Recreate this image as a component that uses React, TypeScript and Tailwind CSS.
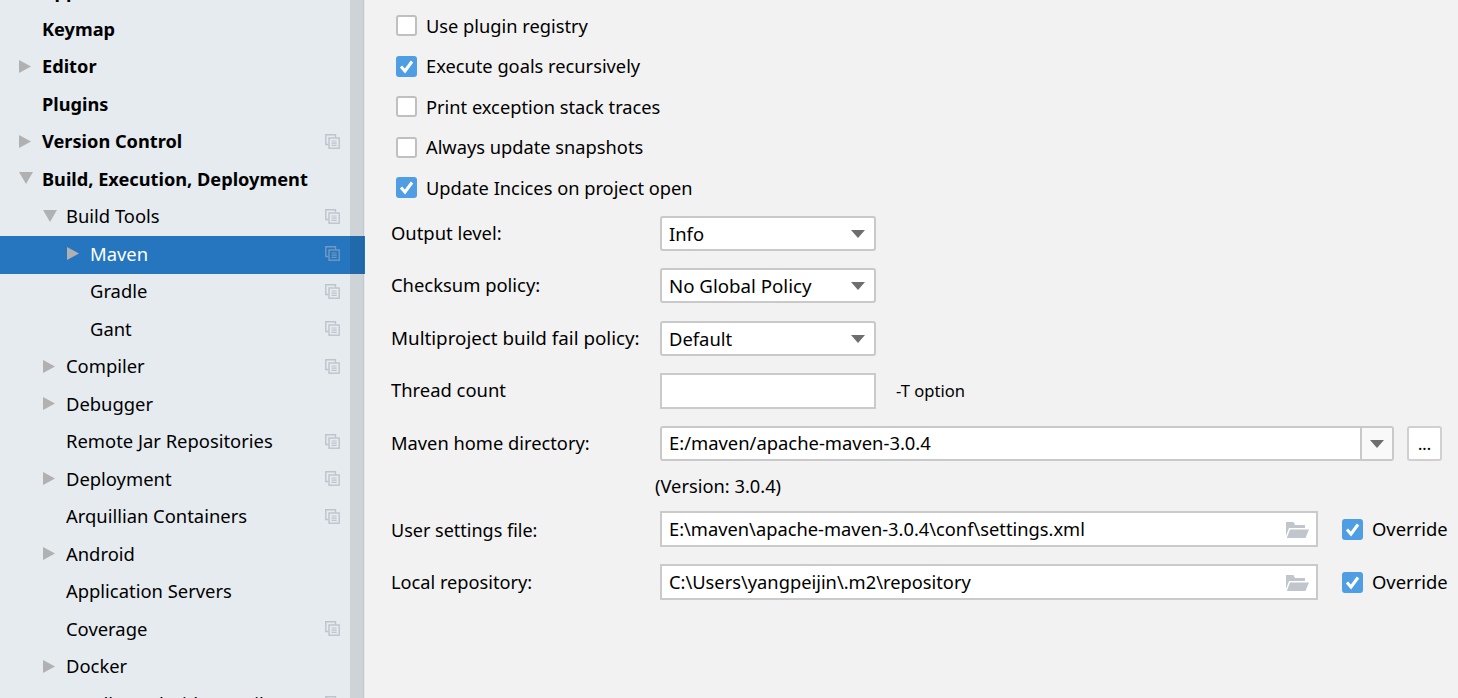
type TreeItem = {
  label: string;
  depth: number;
  arrow?: "right" | "down";
  bold?: boolean;
  copy?: boolean;
  selected?: boolean;
};

const TREE: TreeItem[] = [
  { label: "Appearance & Behavior", depth: 0, arrow: "right", bold: true },
  { label: "Keymap", depth: 0, bold: true },
  { label: "Editor", depth: 0, arrow: "right", bold: true },
  { label: "Plugins", depth: 0, bold: true },
  { label: "Version Control", depth: 0, arrow: "right", bold: true, copy: true },
  { label: "Build, Execution, Deployment", depth: 0, arrow: "down", bold: true },
  { label: "Build Tools", depth: 1, arrow: "down", copy: true },
  { label: "Maven", depth: 2, arrow: "right", copy: true, selected: true },
  { label: "Gradle", depth: 2, copy: true },
  { label: "Gant", depth: 2, copy: true },
  { label: "Compiler", depth: 1, arrow: "right", copy: true },
  { label: "Debugger", depth: 1, arrow: "right" },
  { label: "Remote Jar Repositories", depth: 1, copy: true },
  { label: "Deployment", depth: 1, arrow: "right", copy: true },
  { label: "Arquillian Containers", depth: 1, copy: true },
  { label: "Android", depth: 1, arrow: "right" },
  { label: "Application Servers", depth: 1 },
  { label: "Coverage", depth: 1, copy: true },
  { label: "Docker", depth: 1, arrow: "right" },
  { label: "Gradle-Android Compiler", depth: 1, copy: true },
];

const CHECKS = [
  { label: "Use plugin registry", checked: false },
  { label: "Execute goals recursively", checked: true },
  { label: "Print exception stack traces", checked: false },
  { label: "Always update snapshots", checked: false },
  { label: "Update Incices on project open", checked: true },
];

function CopyIcon({ dim }: { dim?: boolean }) {
  return (
    <svg
      width="15"
      height="15"
      viewBox="0 0 15 15"
      fill="none"
      stroke="#b9c0c7"
      strokeWidth="1.4"
      className={`shrink-0 ${dim ? "opacity-50" : "opacity-90"}`}
    >
      <path d="M3.5 10.5H.8V.8h9.7v2.7" />
      <rect x="4" y="4" width="10.2" height="10.2" />
      <path d="M6.5 7h5.2M6.5 9.2h5.2M6.5 11.4h5.2" strokeWidth="1.2" />
    </svg>
  );
}

function Arrow({ dir }: { dir: "right" | "down" }) {
  if (dir === "right") {
    return (
      <svg width="12" height="13" viewBox="0 0 12 13" className="block">
        <path d="M0 0l12 6.5L0 13z" fill="#b1b1b1" />
      </svg>
    );
  }
  return (
    <svg width="14" height="12" viewBox="0 0 14 12" className="block">
      <path d="M0 0h14L7 12z" fill="#b1b1b1" />
    </svg>
  );
}

function TreeRow({ item }: { item: TreeItem }) {
  const indent = item.depth === 0 ? "pl-[42px]" : item.depth === 1 ? "pl-[66px]" : "pl-[90px]";
  const arrowLeft = item.depth === 0 ? "left-[19px]" : item.depth === 1 ? "left-[43px]" : "left-[67px]";
  return (
    <div
      className={`relative flex h-[37.5px] w-[365px] items-center pb-[2px] pr-[25px] ${indent} ${
        item.selected ? "bg-[#2675bf] text-white" : "text-black"
      } ${item.bold ? "text-[18.2px] font-bold" : ""}`}
    >
      {item.arrow && (
        <span className={`absolute top-[11px] ${arrowLeft}`}>
          <Arrow dir={item.arrow} />
        </span>
      )}
      <span className="flex-1 whitespace-nowrap">{item.label}</span>
      {item.copy && <CopyIcon dim={item.selected} />}
    </div>
  );
}

function Box({ checked }: { checked: boolean }) {
  if (checked) {
    return (
      <span className="flex h-[21px] w-[21px] shrink-0 items-center justify-center rounded-[3px] bg-[#4f9ee3]">
        <svg width="21" height="21" viewBox="0 0 21 21" fill="none" stroke="#fff" strokeWidth="3">
          <path d="M5 10.5l4 4.5 7-9.5" />
        </svg>
      </span>
    );
  }
  return <span className="block h-[21px] w-[21px] shrink-0 rounded-[3px] border-2 border-[#c0c0c0] bg-white" />;
}

function Caret() {
  return (
    <svg width="14" height="8" viewBox="0 0 14 8" className="shrink-0">
      <path d="M0 0h14L7 8z" fill="#6e6e6e" />
    </svg>
  );
}

function FolderIcon() {
  return (
    <svg width="23" height="18" viewBox="0 0 23 18" className="shrink-0">
      <path d="M0 2V16L3 8H19V5H9L7.5 2z" fill="#c0c6cb" />
      <path d="M4 9.5H23L19.5 18H0.8z" fill="#c0c6cb" />
    </svg>
  );
}

function Select({ value, valueClass = "" }: { value: string; valueClass?: string }) {
  return (
    <div className="flex h-[35px] w-[216px] items-center justify-between rounded-[3px] border-2 border-[#c9c9c9] bg-white pl-[7px] pr-[9px]">
      <span className={valueClass}>{value}</span>
      <Caret />
    </div>
  );
}

function FileField({ value }: { value: string }) {
  return (
    <div className="flex h-[36px] w-[658px] items-center justify-between border-2 border-[#cacaca] bg-white pb-[1px] pl-[7px] pr-[7px]">
      <span className="text-[18.3px]">{value}</span>
      <FolderIcon />
    </div>
  );
}

function FormRow({
  label,
  className,
  labelClass = "pb-[2px]",
  children,
}: {
  label: string;
  className: string;
  labelClass?: string;
  children: React.ReactNode;
}) {
  return (
    <div className={`flex items-center ${className}`}>
      <span className={`w-[269px] shrink-0 whitespace-nowrap ${labelClass}`}>{label}</span>
      {children}
    </div>
  );
}

function Override() {
  return (
    <span className="ml-[24px] flex items-center gap-[9px]">
      <Box checked />
      Override
    </span>
  );
}

export default function App() {
  return (
    <div className="flex h-[698px] w-[1458px] overflow-hidden bg-[#f2f2f2] font-['Noto_Sans',sans-serif] text-[18.4px] leading-[24px] text-black">
      <aside className="relative h-full w-[365px] shrink-0 overflow-hidden bg-[#e6ebf0]">
        <div className="mt-[-26.5px]">
          {TREE.map((item) => (
            <TreeRow key={item.label} item={item} />
          ))}
        </div>
        {/* scrollbar thumb sits over the selected row */}
        <div className="absolute inset-y-0 left-[350px] w-[14px] border-r border-black/5 bg-black/10" />
      </aside>

      <main className="min-w-0 flex-1 pl-[26px]">
        <div className="flex flex-col gap-[19.5px] pl-[5px] pt-[15px] text-[18.25px]">
          {CHECKS.map((c) => (
            <label key={c.label} className="flex h-[21px] items-center gap-[9px]">
              <Box checked={c.checked} />
              <span className="whitespace-nowrap">{c.label}</span>
            </label>
          ))}
        </div>

        <div className="mt-[18px] flex flex-col">
          <FormRow label="Output level:" className="h-[35px]">
            <Select value="Info" />
          </FormRow>
          <FormRow label="Checksum policy:" className="mt-[17px] h-[35px]">
            <Select value="No Global Policy" valueClass="pt-[1px] text-[18.7px]" />
          </FormRow>
          <FormRow label="Multiproject build fail policy:" labelClass="pb-[2px] text-[18.8px]" className="mt-[18px] h-[35px]">
            <Select value="Default" />
          </FormRow>
          <FormRow label="Thread count" className="mt-[17px] h-[36px]">
            <div className="h-[36px] w-[216px] border-2 border-[#cacaca] bg-white" />
            <span className="ml-[20px] text-[16.6px]">-T option</span>
          </FormRow>
          <FormRow label="Maven home directory:" labelClass="pb-[2px] text-[18.3px]" className="mt-[17px] h-[35px]">
            <div className="flex h-[35px] w-[734px] items-stretch rounded-[3px] border-2 border-[#c9c9c9] bg-white">
              <span className="flex flex-1 items-center pb-[1px] pl-[7px]">E:/maven/apache-maven-3.0.4</span>
              <span className="flex w-[32px] items-center justify-center border-l-2 border-[#c9c9c9] bg-[#f9f9f9]">
                <Caret />
              </span>
            </div>
            <div className="ml-[13px] flex h-[35px] w-[35px] items-center justify-center rounded-[3px] border-2 border-[#d0d0d0] bg-white text-[16px] font-medium">
              ...
            </div>
          </FormRow>
          <div className="mt-[13px] h-[24px] pl-[264px] text-[18.3px]">(Version: 3.0.4)</div>
          <FormRow label="User settings file:" labelClass="pt-[1px] text-[18px]" className="mt-[13px] h-[36px]">
            <FileField value="E:\maven\apache-maven-3.0.4\conf\settings.xml" />
            <Override />
          </FormRow>
          <FormRow label="Local repository:" labelClass="text-[18.2px]" className="mt-[17px] h-[36px]">
            <FileField value="C:\Users\yangpeijin\.m2\repository" />
            <Override />
          </FormRow>
        </div>
      </main>
    </div>
  );
}
